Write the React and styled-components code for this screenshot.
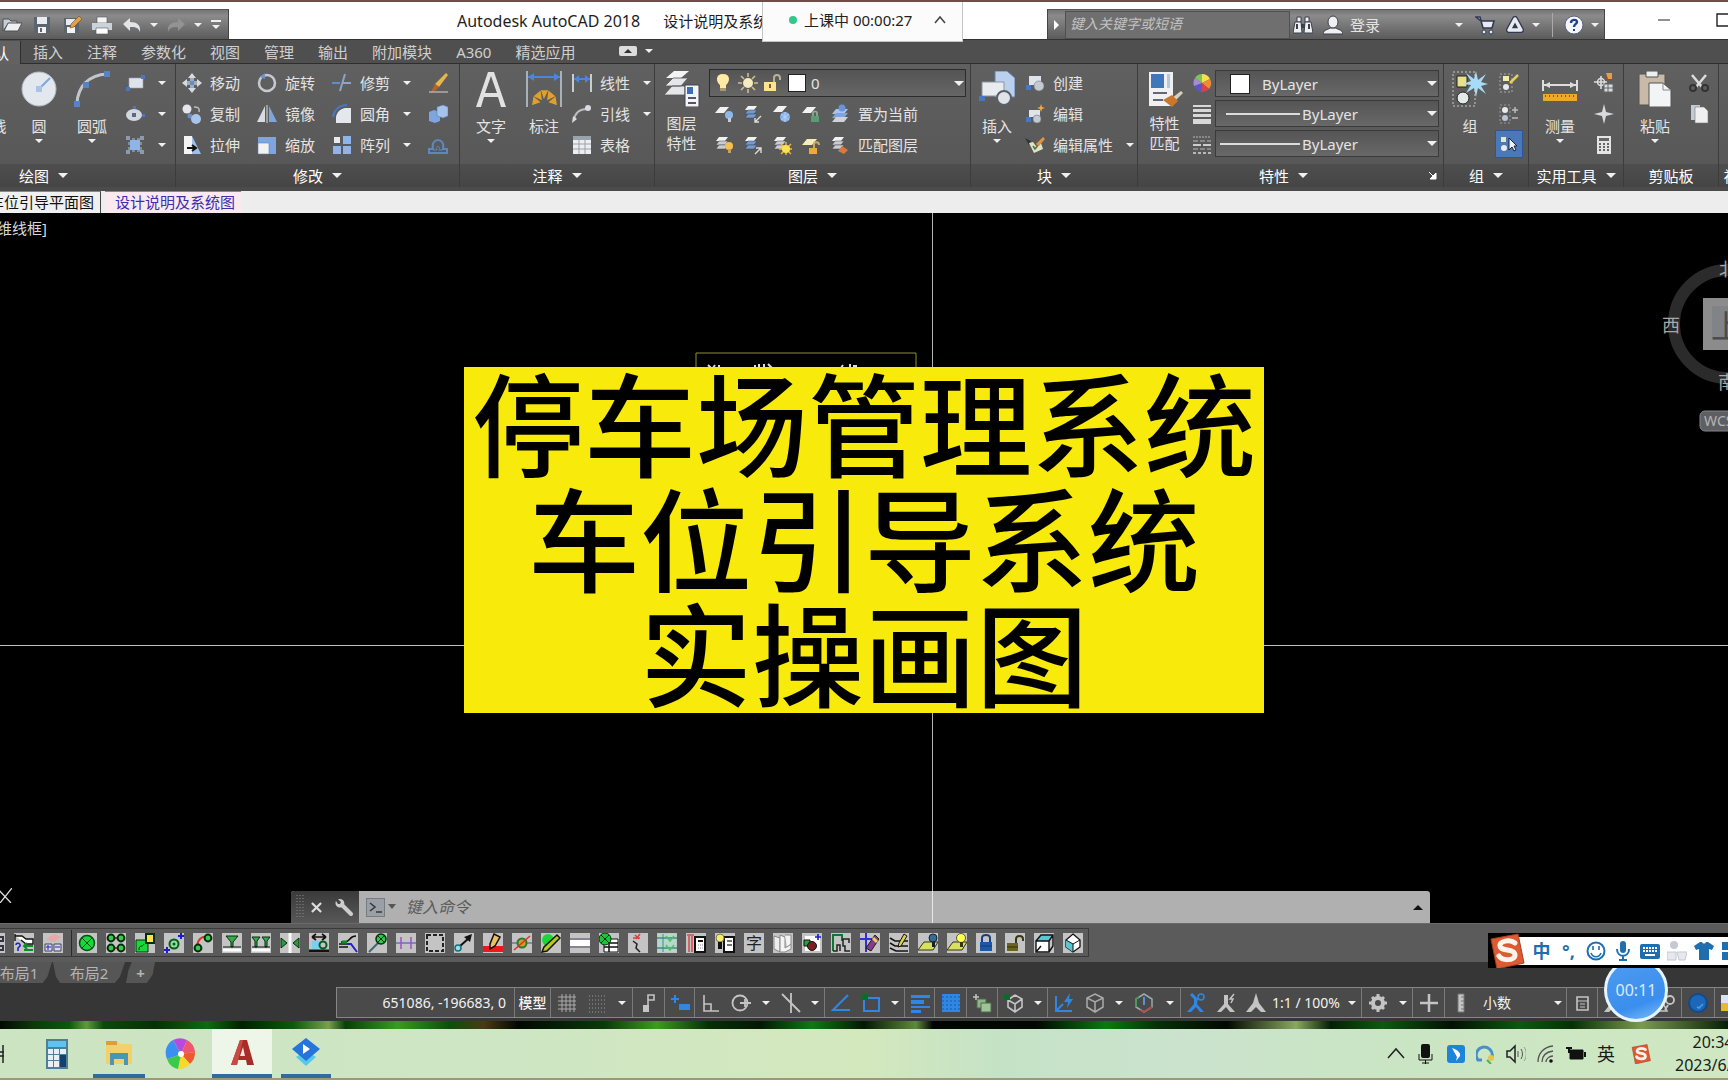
import React, { useState } from "react";
import styled, { createGlobalStyle, css } from "styled-components";

const GlobalStyle = createGlobalStyle`
  * {
    box-sizing: border-box;
  }

  body {
    margin: 0;
    background: #000;
    overflow: hidden;
    font-family: "Noto Sans", "Noto Sans CJK SC", sans-serif;
    font-size: 15px;
    line-height: 20px;
    color: #e4e4e4;
  }

  button,
  input,
  select {
    font: inherit;
    color: inherit;
    background: none;
    border: 0;
    border-radius: 0;
    padding: 0;
    margin: 0;
    outline: none;
  }

  svg {
    display: block;
    flex: none;
  }
`;

/* ---------- icons ---------- */

const Icon = ({ size = 20, box = 20, children }) => (
  <svg width={size} height={size} viewBox={`0 0 ${box} ${box}`} fill="none" aria-hidden="true">
    {children}
  </svg>
);

const Layers = ({ top = "#f2f2f2", mid = "#c9ccd2" }) => (
  <>
    <path d="M5 2h9l-3 4H2z" fill={top} />
    <path d="M5 6h9l-3 4H2z" fill={mid} stroke="#444" strokeWidth=".5" />
    <path d="M5 10h9l-3 4H2z" fill={mid} stroke="#444" strokeWidth=".5" />
  </>
);

const small = {
  open: (
    <>
      <path d="M1 16V4h6l2 2h6v3H6z" fill="#c9ced4" stroke="#4a4f55" />
      <path d="M2 16l4-8h14l-4 8z" fill="#eef0f2" stroke="#4a4f55" />
    </>
  ),
  save: (
    <>
      <path d="M2 2h16v16H2z" fill="#5b6570" />
      <path d="M5 2h10v7H5z" fill="#e8ecf0" />
      <path d="M6 12h8v6H6z" fill="#f4f4f4" />
      <path d="M8 13h2v4H8z" fill="#5b6570" />
    </>
  ),
  saveas: (
    <>
      <path d="M2 3h15v15H2z" fill="#5b6570" />
      <path d="M4 4h9v6H4z" fill="#e8ecf0" />
      <path d="M5 12h8v6H5z" fill="#f4f4f4" />
      <path d="M17 1l3 3-8 8-4 1 1-4z" fill="#e2a04a" stroke="#6b4a22" strokeWidth=".6" />
    </>
  ),
  print: (
    <>
      <path d="M5 2h10v6H5z" fill="#f4f4f4" stroke="#555" strokeWidth=".6" />
      <path d="M0 8h20v7H0z" fill="#cdd2d8" />
      <path d="M4 13h12v6H4z" fill="#fff" stroke="#555" strokeWidth=".6" />
    </>
  ),
  undo: <path d="M1 9l7-6v4c7 0 11 3 10 10-2-5-5-5-10-5v4z" fill="#e2e4e6" />,
  redo: <path d="M19 9l-7-6v4C5 7 1 10 2 17c2-5 5-5 10-5v4z" fill="#939393" />,
  binoculars: (
    <>
      <path d="M4 2h4v5H4zM12 2h4v5h-4z" fill="#f0f0f0" stroke="#39404d" />
      <path d="M2 7h6l1 11H0zM12 7h6l2 11h-9z" fill="#f0f0f0" stroke="#39404d" />
      <path d="M8 9h4v4H8z" fill="#39404d" />
      <path d="M4 9v5M16 9v5" stroke="#39404d" strokeWidth="2" />
    </>
  ),
  user: (
    <>
      <path d="M0 19c1-5 5-4 7-6h6c2 2 6 1 7 6z" fill="#f0f0f0" stroke="#39404d" />
      <ellipse cx="10" cy="7" rx="5" ry="6" fill="#f0f0f0" stroke="#39404d" />
    </>
  ),
  cart: (
    <>
      <path d="M1 2h4l3 11h9l2-7H6z" fill="#e8eaee" stroke="#2f3a55" strokeWidth="1.6" />
      <circle cx="9" cy="17" r="2" fill="#e8eaee" stroke="#2f3a55" />
      <circle cx="16" cy="17" r="2" fill="#e8eaee" stroke="#2f3a55" />
    </>
  ),
  exchange: (
    <>
      <path d="M10 4L4 15h12z" stroke="#2f3a55" strokeWidth="6" strokeLinejoin="round" />
      <path d="M10 4L4 15h12z" stroke="#e8eaee" strokeWidth="3.500" strokeLinejoin="round" />
      <path d="M10 9l-2 4h4z" fill="#2f3a55" />
    </>
  ),
  help: (
    <>
      <circle cx="10" cy="10" r="9" fill="#f4f6fa" stroke="#5a667e" />
      <path d="M7 8c0-4 6-4 6-1 0 2-3 2-3 5" stroke="#24408c" strokeWidth="2.4" />
      <path d="M9 14h2v2H9z" fill="#24408c" />
    </>
  ),
  rect: (
    <>
      <path d="M4 5h14v10H4z" fill="#dfe4ec" stroke="#9aa3b0" strokeWidth=".6" />
      <path d="M1 14h4v4H1zM16 2h4v4h-4z" fill="#4a78c0" />
    </>
  ),
  ellipse: (
    <>
      <ellipse cx="9" cy="11" rx="8" ry="6" fill="#d3d8e0" />
      <path d="M7 9h4v4H7z" fill="#5b6a80" />
      <path d="M8 2h3v3H8zM17 10h3v3h-3z" fill="#4a78c0" />
    </>
  ),
  hatch: (
    <>
      <path d="M5 5h10v10H5z" fill="#8fb4ea" />
      <path d="M2 4h16M2 16h16M4 2v16M16 2v16" stroke="#b7c1cf" strokeDasharray="3 2" />
      <path d="M1 1h4v4H1zM15 1h4v4h-4zM1 15h4v4H1zM15 15h4v4h-4z" fill="#8d9aae" />
    </>
  ),
  move: (
    <>
      <path d="M10 0l4 5H6zM10 20l4-5H6zM0 10l5-4v8zM20 10l-5-4v8z" fill="#d6dbe2" />
      <path d="M8 5h4v10H8zM5 8h10v4H5z" fill="#a4abb5" />
      <path d="M8 8h4v4H8z" fill="#5d8fd0" />
    </>
  ),
  copy: (
    <>
      <circle cx="5" cy="5" r="4.500" fill="#e3e6ea" />
      <circle cx="8" cy="12" r="2.500" fill="#6a8fc4" />
      <circle cx="14" cy="15" r="5" fill="#a9c4e8" />
      <path d="M12 3c4 0 6 1 5 5" stroke="#bbb" strokeWidth="1.5" />
    </>
  ),
  stretch: (
    <>
      <path d="M2 1h8v18H2z" fill="#f2f4f6" />
      <path d="M10 1l9 18h-9z" fill="#9fc0e8" />
      <path d="M5 13h8M10 10l4 3-4 3" stroke="#111" strokeWidth="2" />
    </>
  ),
  rotate: (
    <>
      <circle cx="10" cy="10" r="8" stroke="#c6cad0" strokeWidth="2.5" />
      <path d="M8 0L3 4l5 2z" fill="#6d92c8" />
    </>
  ),
  mirror: (
    <>
      <path d="M8 2v16H0z" fill="#d8dbe0" />
      <path d="M12 2v16h8z" fill="#7fa6dc" />
      <path d="M10 1v18" stroke="#ddd" strokeWidth="1" />
    </>
  ),
  scale: (
    <>
      <path d="M1 2h18v17H1z" fill="#7ea5dd" />
      <path d="M1 8h11v11H1z" fill="#f2f2f2" stroke="#6780a5" strokeWidth=".6" />
    </>
  ),
  trim: (
    <>
      <path d="M0 10h8" stroke="#5d8fd0" strokeWidth="2" />
      <path d="M10 10h9M8 18l5-17" stroke="#8fa4c0" strokeWidth="2" />
    </>
  ),
  fillet: (
    <>
      <path d="M4 19V13c1-5 4-8 9-9h6v15z" fill="#e4e7eb" />
      <path d="M1 13C2 6 7 1 15 1" stroke="#4878bd" strokeWidth="2" />
    </>
  ),
  array: (
    <>
      <path d="M2 2h6v6H2z" fill="#e8eaee" />
      <path d="M11 1h8v8h-8zM1 11h8v8H1zM11 11h8v8h-8z" fill="#8fb4ea" />
    </>
  ),
  erase: (
    <>
      <path d="M18 0l2 2-9 12-4-3z" fill="#e9b648" />
      <path d="M7 11l4 3-4 4-4 1z" fill="#b3642c" />
      <path d="M1 19h19" stroke="#e0d6c0" />
    </>
  ),
  explode: (
    <>
      <path d="M1 8l5-2 6 2v9l-5 2-6-2z" fill="#7ea5dd" />
      <path d="M9 3l6-2 5 2v9l-5 2-6-2z" fill="#a4c2ec" stroke="#5c7caa" strokeWidth=".6" />
    </>
  ),
  offset: (
    <>
      <path d="M1 18h18v-4h-4c3-12-13-12-10 0H1z" stroke="#5f86bd" strokeWidth="2" />
      <path d="M5 15h4c-2-5 4-5 2 0h4" stroke="#5f86bd" />
    </>
  ),
  linear: (
    <>
      <path d="M1 1v18M19 1v18" stroke="#c9ccd2" strokeWidth="2" />
      <path d="M2 6h16" stroke="#4a86dd" strokeWidth="2" />
      <path d="M2 6l5-4v8zM18 6l-5-4v8z" fill="#4a86dd" />
    </>
  ),
  leader: (
    <>
      <path d="M2 16C3 9 7 5 15 5" stroke="#b8bcc2" strokeWidth="2" />
      <circle cx="16" cy="4" r="3" fill="#d8dbe0" />
      <path d="M0 19l1-7 4 3z" fill="#d8dbe0" />
    </>
  ),
  table: (
    <>
      <path d="M1 1h18v18H1z" fill="#eceef0" />
      <path d="M1 1h18v4H1z" fill="#9aa2ac" />
      <path d="M1 9h18M1 14h18M7 5v14M13 5v14" stroke="#9aa2ac" />
    </>
  ),
  bulb: (
    <>
      <path d="M10 1c-8 0-7 8-3 11v3h6v-3c4-3 5-11-3-11z" fill="#ffe9a3" />
      <path d="M7 15h6v3H7z" fill="#a89a6c" />
    </>
  ),
  sun: (
    <>
      <circle cx="10" cy="10" r="5" fill="#f7ecc0" />
      <path
        d="M10 0v4M10 16v4M0 10h4M16 10h4M3 3l3 3M14 14l3 3M3 17l3-3M14 6l3-3"
        stroke="#cdbf8f"
        strokeWidth="1.6"
      />
    </>
  ),
  unlock: (
    <>
      <path d="M1 9h12v9H1z" fill="#ffe38a" />
      <path d="M11 9V5c0-4 6-4 6 0v2" stroke="#b9b09a" strokeWidth="2" />
      <path d="M6 11h2v4H6z" fill="#776326" />
    </>
  ),
  layerOff: (
    <>
      <path d="M6 3h9l-5 6H1z" fill="#f2f2f2" />
      <circle cx="15" cy="11" r="4" fill="#8db8ea" />
      <path d="M14 14h3v4h-3z" fill="#c8ccd2" />
    </>
  ),
  layerIso: (
    <>
      <Layers mid="#6f9bd6" />
      <path d="M18 12l-6 6M12 14v4h4" stroke="#ddd" strokeWidth="1.4" />
    </>
  ),
  layerFreeze: (
    <>
      <path d="M6 2h9l-5 6H1z" fill="#f2f2f2" />
      <circle cx="13" cy="13" r="5" fill="#86b2ec" />
      <path d="M13 8v10M9 10l8 6M17 10l-8 6" stroke="#b9d3f5" />
    </>
  ),
  layerLock: (
    <>
      <path d="M6 3h9l-5 6H1z" fill="#f2f2f2" />
      <path d="M10 12h8v6h-8z" fill="#5d9c72" />
      <path d="M12 12V9c0-2 4-2 4 0v3" stroke="#8fb49b" strokeWidth="1.6" />
    </>
  ),
  layerCur: (
    <>
      <path d="M6 5h12l-4 5H2z" fill="#a7c5ee" />
      <path d="M6 9h12l-4 5H2z" fill="#7ea5dd" />
      <path d="M6 13h12l-4 5H2z" fill="#d0d4da" />
      <circle cx="12" cy="4" r="3.500" fill="#6a95d4" />
    </>
  ),
  layerOn: (
    <>
      <Layers />
      <circle cx="15" cy="11" r="4" fill="#f5c04e" />
      <path d="M14 14h3v4h-3z" fill="#c8a25a" />
    </>
  ),
  layerUniso: (
    <>
      <Layers mid="#6f9bd6" />
      <path d="M12 19l6-6M13 13h5v5" stroke="#ddd" strokeWidth="1.4" />
    </>
  ),
  layerThaw: (
    <>
      <Layers />
      <path d="M14 7v13M7 14h13M9 9l10 10M19 9L9 19" stroke="#e9bf3a" strokeWidth="1.4" />
      <circle cx="14" cy="14" r="4" fill="#ffe04e" />
    </>
  ),
  layerUnlock: (
    <>
      <path d="M6 4h10l-5 6H1z" fill="#f4efb8" />
      <path d="M8 13h8v6H8z" fill="#eda93c" />
      <path d="M13 13V9c0-2 5-3 5 1" stroke="#c9a868" strokeWidth="2" />
    </>
  ),
  layerMatch: (
    <>
      <Layers />
      <path d="M12 11l6 4-4 4-6-3z" fill="#d9793a" />
    </>
  ),
  create: (
    <>
      <path d="M4 3h12v9H4z" fill="#dfe4ec" />
      <path d="M1 12h5v5H1z" fill="#4a78c0" />
      <circle cx="14" cy="13" r="5" fill="#c5cad2" stroke="#777" strokeWidth=".6" />
    </>
  ),
  edit: (
    <>
      <path d="M4 6h11v7H4z" fill="#dfe4ec" />
      <path d="M1 13h5v5H1z" fill="#4a78c0" />
      <circle cx="12" cy="15" r="4" fill="#c5cad2" stroke="#777" strokeWidth=".6" />
      <path d="M16 0l1 3 3 1-3 1-1 3-1-3-3-1 3-1z" fill="#f5a83c" />
    </>
  ),
  editAttr: (
    <>
      <path d="M0 3l6 3-2 4z" fill="#333" />
      <path d="M4 8l5 10 9-4-2-6-5 3-3-4z" fill="#dde3c8" />
      <path d="M8 11l2 3 4-5" stroke="#5a6a3a" strokeWidth="1.5" />
      <path d="M18 2l2 2-6 7-3-2z" fill="#e2933c" />
    </>
  ),
  wheel: (
    <>
      <path d="M10 10L10 1A9 9 0 0 1 18 6z" fill="#f6e04c" />
      <path d="M10 10l8-4a9 9 0 0 1-1 10z" fill="#ef8a3c" />
      <path d="M10 10l7 6a9 9 0 0 1-8 3z" fill="#d8404a" />
      <path d="M10 10l-1 9a9 9 0 0 1-7-6z" fill="#5a57c0" />
      <path d="M10 10l-8 3a9 9 0 0 1 1-8z" fill="#a98ad6" />
      <path d="M10 10L3 5a9 9 0 0 1 7-4z" fill="#79c65c" />
    </>
  ),
  weights: <path d="M1 1h18v2H1zM1 5h18v3H1zM1 10h18v3H1zM1 15h18v5H1z" fill="#d8d8d8" />,
  linetypes: (
    <>
      <path d="M1 2h18" stroke="#b8b8b8" strokeDasharray="2 1" />
      <path d="M1 6h18M1 14h18" stroke="#b8b8b8" strokeDasharray="5 2" />
      <path d="M1 10h18" stroke="#ccc" strokeWidth="2" strokeDasharray="8 2" />
      <path d="M1 18h18" stroke="#b8b8b8" strokeWidth="2" strokeDasharray="3 2" />
    </>
  ),
  groupEdit: (
    <>
      <path d="M1 1h12v18H1z" stroke="#aaa" strokeDasharray="2 2" />
      <path d="M4 3h6v5H4z" fill="#f0ecb0" />
      <circle cx="7" cy="14" r="3" fill="#e8eaee" />
      <path d="M19 2l-8 8" stroke="#e4d24c" strokeWidth="2.5" />
    </>
  ),
  ungroup: (
    <>
      <path d="M1 1h10v18H1z" stroke="#999" strokeDasharray="2 2" />
      <circle cx="6" cy="6" r="3" fill="#e8eaee" />
      <circle cx="6" cy="14" r="3" fill="#b8c6da" />
      <path d="M13 6h6M16 3v6M13 14h6" stroke="#bbb" strokeWidth="1.5" />
    </>
  ),
  groupSel: (
    <>
      <path d="M2 3h5v5H2z" fill="#dfe8c8" />
      <circle cx="5" cy="14" r="3" fill="#e8eaee" />
      <path d="M10 4v12l3-3 2 4 2-1-2-4h3z" fill="#e6f2ff" stroke="#223" />
    </>
  ),
  quickSel: (
    <>
      <path d="M0 9h13M7 3v13" stroke="#ddd" strokeWidth="1.6" />
      <circle cx="7" cy="9" r="3.500" stroke="#ddd" strokeWidth="1.5" />
      <path d="M12 0h6v6h-4z" fill="#ef9a3c" />
      <path d="M10 11h9v8h-9z" fill="#d8dbe0" stroke="#666" />
      <path d="M10 15h9M14 11v8" stroke="#666" />
    </>
  ),
  point: <path d="M10 0l2 8 8 2-8 2-2 8-2-8-8-2 8-2z" fill="#d8dbe0" />,
  calc: (
    <>
      <path d="M3 1h14v18H3z" fill="#e4e4e4" />
      <path d="M5 3h10v3H5z" fill="#666" />
      <path d="M6 8v9M10 8v9M14 8v9" stroke="#666" strokeWidth="2" strokeDasharray="2 1" />
    </>
  ),
  cut: (
    <>
      <path d="M3 2l10 12M17 2L7 14" stroke="#dcdcdc" strokeWidth="2.5" />
      <circle cx="4" cy="15" r="3" stroke="#333" strokeWidth="2" />
      <circle cx="16" cy="15" r="3" stroke="#333" strokeWidth="2" />
    </>
  ),
  copyClip: (
    <>
      <path d="M2 1h9v15H2z" fill="#c5cad2" />
      <path d="M6 3h9l4 4v12H6z" fill="#f0f0f0" stroke="#777" strokeWidth=".6" />
    </>
  ),
};

// 36px artwork used by the tall ribbon buttons
const big = {
  polyline: <circle cx="18" cy="18" r="14" stroke="#b4b8be" strokeWidth="3" />,
  circle: (
    <>
      <circle cx="18" cy="18" r="17" fill="#e3e7ee" stroke="#b4bac4" />
      <path d="M18 18L29 7" stroke="#7ea5dd" strokeWidth="2" />
      <path d="M15 15h6v6h-6z" fill="#a9c4e8" />
    </>
  ),
  arc: (
    <>
      <path d="M3 32C4 16 14 4 33 3" stroke="#c2c6cc" strokeWidth="3" />
      <path d="M0 30h6v6H0zM30 0h6v6h-6zM9 11h6v6H9z" fill="#5682c8" />
    </>
  ),
  text: <path d="M3 36L15 1h6l12 35h-5l-3-10H11L8 36zM12 22h12L18 5z" fill="#e2e2e2" fillRule="evenodd" />,
  dim: (
    <>
      <path d="M1 0v36M35 0v36" stroke="#aab0b8" strokeWidth="2" />
      <path d="M2 6h32" stroke="#4a86dd" strokeWidth="2" />
      <path d="M2 6l6-4v8zM34 6l-6-4v8z" fill="#4a86dd" />
      <path
        d="M7 33l6-2-5-4zM9 25l6 3-1-7zM16 20l2 6 3-6zM28 25l-6 3 1-7zM30 33l-6-2 5-4z"
        fill="#e0a02c"
        stroke="#e0a02c"
        strokeWidth="1.5"
      />
    </>
  ),
  layerProps: (
    <>
      <path d="M10 0h15l-8 7H2z" fill="#f4f4f4" />
      <path d="M9 7h15l-7 8H1zM8 15h13v9H0z" fill="#e4e6ea" stroke="#555" strokeWidth=".8" />
      <path d="M21 14h14v22H21z" fill="#f2f4f6" stroke="#445" />
      <path d="M23 16h6v7h-6z" fill="#3e6db5" />
      <path d="M24 27h8M24 32h8" stroke="#556" strokeWidth="2" />
    </>
  ),
  insert: (
    <>
      <path d="M16 0h12l8 7v19H16z" fill="#b9d0ef" stroke="#64809f" />
      <path d="M3 11h22v14H3z" fill="#e8ebef" stroke="#8d949e" />
      <circle cx="25" cy="27" r="7" fill="#e0e3e8" stroke="#596069" strokeWidth="2" />
      <path d="M0 25h6v5H0z" fill="#4a78c0" />
    </>
  ),
  matchProps: (
    <>
      <path d="M2 1h24v34H2z" fill="#eef0f2" />
      <path d="M4 3h13v14H4z" fill="#3e78b8" />
      <path d="M20 3h3v14h-3z" fill="#b8c6da" />
      <path d="M6 22h14M6 29h10" stroke="#667" strokeWidth="2" />
      <path d="M34 20l2 2-8 8-3-3z" fill="#d8d0c0" />
      <path d="M16 29l9-5 6 6-6 6z" fill="#c9772c" />
    </>
  ),
  group: (
    <>
      <path d="M1 1h22v34H1z" stroke="#c8c8c8" strokeDasharray="2 2" />
      <path d="M5 5h10v11H5z" fill="#e9e08a" stroke="#222" />
      <circle cx="11" cy="27" r="6" fill="#e4eae8" stroke="#222" />
      <path d="M24 0l2 9 8-6-5 8 7 2-7 2 5 8-8-6-2 9-2-9-8 5 5-8-8-1 8-3-5-8 8 6z" fill="#a7dcf8" />
    </>
  ),
  measure: (
    <>
      <path d="M1 9v11M35 9v11" stroke="#ddd" strokeWidth="2" />
      <path d="M2 14h32" stroke="#ddd" strokeWidth="2" />
      <path d="M2 14l6-3v6zM34 14l-6-3v6z" fill="#ddd" />
      <path d="M1 23h34v7H1z" fill="#eda92c" />
      <path d="M3 25h30" stroke="#8a5a10" strokeWidth="2" strokeDasharray="1 3" />
    </>
  ),
  paste: (
    <>
      <path d="M2 3h26v31H2z" fill="#c8b9a8" stroke="#555" />
      <path d="M9 0h12v6H9z" fill="#eceef0" stroke="#555" />
      <path d="M12 12h14l8 7v17H12z" fill="#f2f4f6" stroke="#555" />
      <path d="M26 12v7h8" stroke="#888" />
    </>
  ),
};

const G = "#0c8a2c";

// drawing helper toolbar, each on a light tile
const helper = {
  nodes: <path d="M12 4h6v4h-6zM12 13h6v4h-6z" stroke="#334" strokeWidth="2" />,
  help: (
    <>
      <path d="M1 1v7M1 3h7l4 3h7v5h-7L7 7" fill="#fff" stroke="#111" strokeWidth="1.4" />
      <path d="M2 12c0-3 5-2 4 1l-2 2v3" stroke="#2222c8" strokeWidth="1.6" />
      <path d="M10 13h9M10 17h9M13 10l-3 3 3 3" stroke={G} strokeWidth="2" />
    </>
  ),
  blocks: (
    <>
      <path d="M3 6l8-5 7 3-7 5z" fill="#e8a8a8" />
      <path d="M2 11h7v7H2zM11 11h7v7h-7z" fill="#d8d8f0" stroke="#445" />
      <path d="M3 14h5M5 12v5M12 14h5" stroke="#2222c8" />
    </>
  ),
  lamp: (
    <>
      <circle cx="10" cy="10" r="7.500" fill="#18d838" stroke="#064d14" strokeWidth="1.5" />
      <path d="M5 5l10 10M15 5L5 15" stroke="#064d14" />
    </>
  ),
  four: (
    <>
      <path d="M5 5h10M5 15h10" stroke="#d03020" strokeWidth="2" />
      {[5, 15].map((x) => [5, 15].map((y) => (
        <circle key={`${x}${y}`} cx={x} cy={y} r="3.400" fill="#3ac850" stroke="#042d0c" strokeWidth="2" />
      )))}
    </>
  ),
  replace: (
    <>
      <path d="M1 7h12v12H1z" fill="#18d838" stroke="#042d0c" />
      <path d="M11 1h8v9h-8z" fill="#ffe24a" stroke="#042d0c" strokeWidth="2" />
      <path d="M4 17c0-6 3-2 5-6" stroke="#042d0c" />
    </>
  ),
  place: (
    <>
      <circle cx="10" cy="11" r="4.500" fill="#8fe0a0" stroke="#0a5a1c" strokeWidth="2" />
      <circle cx="10" cy="11" r="1.500" fill="#0a5a1c" />
      <path d="M0 17h6M3 14v6M14 3h6M17 0v6" stroke="#1818e0" strokeWidth="2" />
    </>
  ),
  curve: (
    <>
      <path d="M4 13C5 6 9 3 14 4" stroke="#e03020" strokeWidth="2" />
      <circle cx="5" cy="15" r="3.400" fill="#3ac850" stroke="#042d0c" strokeWidth="2" />
      <circle cx="15" cy="5" r="3.400" fill="#3ac850" stroke="#042d0c" strokeWidth="2" />
    </>
  ),
  glass: (
    <>
      <path d="M4 3h12l-5 6v5H9V9z" fill="#3aa850" stroke="#042d0c" />
      <path d="M1 17h18" stroke="#fff" strokeWidth="3" />
      <path d="M1 14h18" stroke="#111" />
    </>
  ),
  glasses: (
    <>
      <path d="M1 4h8L6 8v6H4V8zM11 4h8l-3 4v6h-2V8z" fill="#3aa850" stroke="#042d0c" />
      <path d="M1 17h18" stroke="#fff" strokeWidth="3" />
      <path d="M1 14h18" stroke="#111" />
    </>
  ),
  mirror: (
    <>
      <path d="M10 0v20" stroke="#fff" strokeWidth="3" />
      <path d="M1 5l6 5-6 5zM19 5l-6 5 6 5z" fill="#2a9a40" stroke="#042d0c" />
    </>
  ),
  align: (
    <>
      <path d="M3 8h7v8H3z" fill="#7ad0f0" />
      <path d="M3 4h14M3 4l4-3M3 4l4 3M17 4l-4-3M17 4l-4 3" stroke="#111" strokeWidth="1.6" />
      <circle cx="14" cy="12" r="3.500" stroke="#0a5a1c" strokeWidth="2" />
      <path d="M0 18h20" stroke="#111" strokeWidth="3" />
    </>
  ),
  wire: (
    <>
      <path d="M1 14h9M3 9h4c6-1 4-6 11-6M1 11h9" stroke="#111" strokeWidth="1.6" />
      <path d="M9 11h4l6 8" stroke="#2222c8" strokeWidth="2" />
      <path d="M4 9h5" stroke={G} strokeWidth="3" />
    </>
  ),
  lampLine: (
    <>
      <path d="M2 19L12 9" stroke="#3c6a70" strokeWidth="2" />
      <circle cx="14" cy="6" r="5" fill="#30c848" stroke="#042d0c" strokeWidth="1.5" />
      <path d="M11 3l6 6M17 3l-6 6" stroke="#042d0c" />
    </>
  ),
  breakLine: (
    <>
      <path d="M0 10h20" stroke="#6a70b8" strokeWidth="1.5" />
      <path d="M5 4v12M15 4v12" stroke="#a050c8" strokeWidth="1.5" />
    </>
  ),
  dashed: <path d="M2 2h16v16H2z" stroke="#222" strokeWidth="2" strokeDasharray="4 2" />,
  arrow: (
    <>
      <path d="M5 14L15 5" stroke="#111" strokeWidth="2" />
      <path d="M18 1l-2 8-6-5z" fill="#111" />
      <circle cx="4" cy="15" r="3" fill="#9ae0e8" stroke="#107080" strokeWidth="1.5" />
    </>
  ),
  redPen: (
    <>
      <path d="M0 13h20v6H0z" fill="#ee1818" />
      <path d="M11 1l6 3-5 9-5 3V11z" fill="#e8c060" stroke="#111" strokeWidth="1.5" />
    </>
  ),
  strike: (
    <>
      <path d="M0 10h20" stroke="#456" />
      <circle cx="10" cy="10" r="4.500" fill="#c8a030" stroke="#2a7a30" strokeWidth="2" />
      <path d="M2 17L18 3" stroke="#e03020" strokeWidth="1.500" />
    </>
  ),
  greenPen: (
    <>
      <circle cx="7" cy="7" r="6" fill="#18d838" />
      <path d="M16 2l3 3L6 18l-5 1 2-5z" fill="#b8c820" stroke="#111" strokeWidth="1.5" />
    </>
  ),
  band: (
    <>
      <path d="M0 7h20v6H0z" fill="#fff" />
      <path d="M0 6h20M0 14h20" stroke="#446" />
    </>
  ),
  lampTable: (
    <>
      <path d="M5 6h14v13H5z" fill="#fff" stroke="#111" />
      <path d="M5 10h14M5 14h14M10 6v13" stroke="#111" strokeWidth="1.5" />
      <circle cx="6" cy="6" r="6" fill="#18c838" stroke="#042d0c" />
      <path d="M2 2l8 8M10 2l-8 8" stroke="#042d0c" />
    </>
  ),
  spark: (
    <>
      <path d="M5 8l4 3-1 4 4 4" stroke="#222" strokeWidth="1.5" />
      <path d="M7 2l4 4M12 1l-4 5M5 5h7" stroke="#d84040" strokeWidth="1.5" />
    </>
  ),
  grid: (
    <>
      <path d="M1 1h18v18H1z" fill="#b4d8cc" />
      <path d="M0 5h20M0 15h20" stroke="#488" strokeWidth="1.4" />
      <path d="M6 1v18" stroke="#488" />
      <path d="M9 3l4 5 4-5M9 12l4 5 4-5" stroke="#50c060" strokeWidth="1.5" />
    </>
  ),
  redTable: (
    <>
      <path d="M1 2h7M3 2v17M6 2v17" stroke="#d06868" strokeWidth="2" />
      <path d="M9 4h10v15H9z" fill="#fff" stroke="#111" strokeWidth="2" />
      <path d="M12 8h5" stroke="#111" strokeWidth="2" />
      <path d="M12 12h5M12 15h5" stroke="#889" strokeDasharray="1 1" />
    </>
  ),
  bulbTable: (
    <>
      <path d="M9 4h10v15H9z" fill="#fff" stroke="#111" strokeWidth="2" />
      <path d="M12 8h5M12 12h5" stroke="#445" strokeWidth="1.5" />
      <circle cx="5" cy="5" r="4" fill="#f4ee60" stroke="#776" />
      <path d="M3 9h4v7H3z" fill="#111" />
    </>
  ),
  char: (
    <text x="10" y="16" textAnchor="middle" fontSize="16" fill="#222">
      字
    </text>
  ),
  pages: (
    <>
      <path d="M1 3l6 2v14l-6-3z" fill="#eee" stroke="#888" />
      <path d="M7 2l5 2v11l6-4v5l-6 3H7z" fill="#f4f4f4" stroke="#888" />
      <path d="M12 2h6v9l-4 3" fill="#f4f4f4" stroke="#888" />
    </>
  ),
  cherry: (
    <>
      <path d="M3 3h15v15H3z" fill="#fff" />
      <path d="M2 7h6v6H2z" fill="#28a040" stroke="#111" />
      <circle cx="10" cy="13" r="4.500" fill="#7a2020" stroke="#111" />
      <path d="M13 4h6M16 1v6" stroke="#1818e0" strokeWidth="1.6" />
    </>
  ),
  contour: (
    <>
      <path d="M2 18V2h9v6" stroke="#0c7a2c" strokeWidth="2" />
      <path d="M2 18h4v-6h3v6M19 18h-5v-5h-2V6h6v4" stroke="#222" strokeWidth="1.500" />
    </>
  ),
  cross: (
    <>
      <path d="M0 6h16M6 0v19" stroke="#3030d8" strokeWidth="2" />
      <path d="M15 2l4 4-8 12-5-3z" fill="#8a3a88" stroke="#221" />
      <path d="M13 5l4 4" stroke="#e8d060" strokeWidth="3" />
    </>
  ),
  sketch: (
    <>
      <path d="M1 5l5 3h13M1 10l5 3h13M1 15l6 3h12" stroke="#111" strokeWidth="1.500" />
      <path d="M15 1l3 2-6 10-3 1 1-4z" fill="#e0d048" stroke="#111" />
    </>
  ),
  layerBlue: (
    <>
      <path d="M6 9h14l-5 8H0z" fill="#d8e060" stroke="#331" />
      <circle cx="15" cy="5" r="4" fill="#3a6a90" stroke="#123" />
      <path d="M14 9h3v5h-3z" fill="#123" />
    </>
  ),
  layerYellow: (
    <>
      <path d="M6 9h14l-5 8H0z" fill="#d8e060" stroke="#331" />
      <circle cx="14" cy="5" r="4.500" fill="#ffff50" stroke="#554" />
      <path d="M13 9h3v5h-3z" fill="#332" />
    </>
  ),
  lock: (
    <>
      <path d="M4 9h12v9H4z" fill="#1c58a8" />
      <path d="M6 9V5c0-4 8-4 8 0v4" stroke="#1c3f78" strokeWidth="2" />
      <path d="M4 13h12" stroke="#123a70" />
    </>
  ),
  unlock: (
    <>
      <path d="M2 10h11v8H2z" fill="#6a6418" />
      <path d="M11 10V6c0-4 7-4 7 0v2" stroke="#3a3610" strokeWidth="2" />
      <path d="M2 14h11" stroke="#332f08" />
    </>
  ),
  cube: (
    <>
      <path d="M2 8l5-6h12l-4 6z" fill="#58c8d0" />
      <path d="M2 8h13v11H2z" fill="#fff" />
      <path d="M2 8h13v11H2zM2 8l5-6h12v11l-4 6M15 8l4-6M2 19l5-6" stroke="#111" strokeWidth="1.4" />
    </>
  ),
  cubeIso: (
    <>
      <path d="M10 1l7 6v7l-7 5-7-5V7z" fill="#fff" stroke="#111" strokeWidth="1.3" />
      <path d="M3 7l7 4v8l-7-5z" fill="#58c8d0" />
      <path d="M3 7l7 4 7-4M10 11v8" stroke="#111" />
    </>
  ),
};

const B = "#2f86e4";
const W = "#c4c4c4";

const status = {
  grid: <path d="M5 1v18M9 1v18M13 1v18M17 1v18M1 4h18M1 8h18M1 12h18M1 16h18" stroke="#aaa" />,
  snap: (
    <path d="M2 3h17M2 7h17M2 11h17M2 15h17M2 19h17" stroke="#999" strokeDasharray="1 2" />
  ),
  infer: (
    <>
      <path d="M4 12h6v7H4z" fill={W} />
      <path d="M9 12V2h6v5H9" stroke={W} strokeWidth="1.6" />
    </>
  ),
  dyn: (
    <>
      <path d="M1 6h8M5 2v8" stroke={B} strokeWidth="2" />
      <path d="M9 11h11v6H9z" fill={B} />
    </>
  ),
  ortho: <path d="M3 2v16h15M3 11h7v7" stroke={W} strokeWidth="1.6" />,
  polar: (
    <>
      <circle cx="9" cy="10" r="7.500" stroke={W} strokeWidth="1.8" />
      <path d="M9 10h11M14 6v8" stroke={W} strokeWidth="1.8" />
    </>
  ),
  iso: <path d="M10 0v20M1 1l18 18" stroke={W} strokeWidth="1.8" />,
  track: <path d="M17 2L2 17h17" stroke={B} strokeWidth="2" />,
  osnap: (
    <>
      <path d="M3 5h15v13H3z" stroke={B} strokeWidth="2" />
      <path d="M1 1h6v6H1z" fill="#0c6a2c" />
    </>
  ),
  weight: <path d="M1 2h19v3H1zM1 7h13v4H1zM1 13h19v2H1zM1 17h10v3H1z" fill={B} />,
  transp: (
    <>
      <path d="M1 1h18v18H1z" fill={B} />
      <path d="M1 4h18M1 8h18M1 12h18M1 16h18" stroke="#1b5aa8" strokeDasharray="2 2" />
    </>
  ),
  cycle: (
    <>
      <path d="M5 6h9v9H5z" fill="#8fb487" stroke="#4d6b48" />
      <path d="M9 10h10v9H9z" fill="#9fc495" stroke="#4d6b48" />
      <path d="M1 4h6M4 1v6" stroke={W} strokeWidth="1.5" />
    </>
  ),
  snap3d: (
    <>
      <path d="M11 2l7 4v8l-7 5-7-5V7l7-5M4 7l7 4 7-5M11 11v8" stroke={W} strokeWidth="1.6" />
      <path d="M0 1h6v6H0z" fill="#0c6a2c" />
    </>
  ),
  ducs: (
    <>
      <path d="M2 3v15h16M2 18l7-7" stroke={B} strokeWidth="2" />
      <path d="M16 0l-6 9h4l-1 6 6-9h-4z" fill={B} />
    </>
  ),
  cube: <path d="M10 1l8 4v9l-8 5-8-5V5zM2 5l8 4 8-4M10 9v10" stroke="#aaa" strokeWidth="1.5" />,
  gizmo: (
    <>
      <path d="M10 1l8 5v8l-8 5-8-5V6z" stroke="#9aa" strokeWidth="1.5" />
      <path d="M2 14V6l3-2" stroke="#3c9a50" strokeWidth="1.5" />
      <path d="M6 17l4 2 8-5" stroke="#b84848" strokeWidth="1.5" />
      <path d="M10 4v8" stroke="#5a90d8" strokeWidth="2" />
    </>
  ),
  annoVis: (
    <>
      <path d="M8 5h4l-1 6 7 8h-4l-4-5-5 5H1l7-8z" fill={B} />
      <circle cx="15" cy="4" r="3" stroke={B} strokeWidth="1.5" />
      <path d="M5 1l5 5" stroke={B} strokeWidth="3" />
    </>
  ),
  annoAuto: (
    <>
      <path d="M8 2h4v9l7 8h-5l-4-5-5 5H1l7-8z" fill={W} />
      <path d="M18 1l-4 5h3l-2 4" stroke={W} strokeWidth="1.5" />
    </>
  ),
  anno: <path d="M10 0l3 10 7 9h-5l-5-5-5 5H0l7-9z" fill={W} />,
  gear: (
    <>
      <circle cx="10" cy="10" r="5" stroke={W} strokeWidth="4" />
      <path d="M10 1v4M10 15v4M1 10h4M15 10h4M4 4l2 2M14 14l2 2M4 16l2-2M14 6l2-2" stroke={W} strokeWidth="3" />
    </>
  ),
  plus: <path d="M10 1v18M1 10h18" stroke={W} strokeWidth="2.5" />,
  ruler: <path d="M7 1h6v18H7zM10 4h3M10 8h3M10 12h3M10 16h3" fill={W} stroke="#777" />,
  props: (
    <>
      <path d="M5 4h11v13H5z" stroke={W} strokeWidth="1.6" />
      <path d="M5 8h11M8 11h5M8 14h5" stroke={W} />
    </>
  ),
  isolate: (
    <>
      <path d="M1 18l5-10 5 10z" stroke={W} strokeWidth="1.6" />
      <circle cx="14" cy="7" r="4" stroke={W} strokeWidth="1.8" />
      <path d="M12 12l-3 5" stroke={W} strokeWidth="1.8" />
    </>
  ),
  accel: (
    <>
      <circle cx="10" cy="10" r="9" fill="#1d67b8" stroke="#134a88" strokeWidth="2" />
      <path d="M9 14l2 1 4-4" stroke="#4f9ae8" strokeWidth="1.5" />
    </>
  ),
  shot: (
    <>
      <path d="M1 2h19v16H1z" fill="#d8e4ee" />
      <path d="M1 10h10v8H1z" fill="#e8b830" />
    </>
  ),
};

const Sogou = ({ size }) => (
  <Icon size={size} box={36}>
    <path d="M2 6l27-5 6 29-27 6z" fill="#dd5a33" stroke="#a83e20" />
    <path
      d="M26 10c-5-4-16-2-15 3 1 6 15 2 15 9 0 6-13 6-16 1"
      stroke="#fff4ea"
      strokeWidth="5"
      strokeLinecap="round"
    />
  </Icon>
);

/* ---------- layout ---------- */

const Page = styled.div`
  position: relative;
  min-height: 100vh;
  display: flex;
  flex-direction: column;
  overflow: hidden;
`;

const Caret = styled.i`
  flex: none;
  border: ${(p) => (p.$big ? 5 : 4)}px solid transparent;
  border-top-color: #f0f0f0;
  border-bottom: 0;
`;

const TitleBar = styled.header`
  display: flex;
  align-items: flex-end;
  height: 40px;
  border-top: 2px solid #6f4c4a;
  border-bottom: 1px solid #333;
  background: #fff;
`;

const chrome = css`
  height: 30px;
  display: flex;
  align-items: center;
  background: linear-gradient(#757575, #8b8b8b 20%, #5b5b5b);
  border-top: 1px solid #555;
`;

const QuickAccess = styled.div`
  ${chrome}
  width: 232px;
  margin-left: -3px;
  border-right: 1px solid #444;
`;

const QuickButton = styled.button`
  display: flex;
  justify-content: center;
  align-items: center;
  flex: none;
  width: ${(p) => (p.$narrow ? 14 : 30)}px;
  height: 28px;
`;

const CustomizeButton = styled(QuickButton)`
  flex-direction: column;
  gap: 3px;
  width: 22px;

  &::before {
    content: "";
    width: 10px;
    height: 2px;
    background: #f0f0f0;
  }
`;

const WindowTitle = styled.div`
  flex: 1;
  align-self: flex-start;
  display: flex;
  gap: 23px;
  padding: 9px 0 0 228px;
  overflow: hidden;
  white-space: nowrap;
  color: #1e1e1e;

  span:first-child {
    font-size: 16px;
  }
`;

const ClassTimer = styled.button`
  z-index: 1;
  align-self: flex-start;
  display: flex;
  align-items: center;
  width: 201px;
  height: 40px;
  padding: 0 16px 4px 26px;
  gap: 7px;
  background: #fbfbfb;
  border: 1px solid #c4c4c4;
  border-top: 0;
  color: #222;
  white-space: nowrap;

  &::before {
    content: "";
    width: 8px;
    height: 8px;
    border-radius: 50%;
    background: #35c68c;
  }

  svg {
    margin-left: auto;
  }
`;

const InfoCenter = styled.div`
  ${chrome}
  width: 558px;
  margin-left: 84px;
  border-left: 1px solid #444;
  border-right: 1px solid #444;
`;

const InfoToggle = styled.button`
  width: 17px;
  height: 28px;
  display: flex;
  align-items: center;
  justify-content: center;

  &::before {
    content: "";
    border: 5px solid transparent;
    border-left-color: #fff;
    border-right: 0;
  }
`;

const SearchInput = styled.input`
  width: 225px;
  height: 28px;
  padding: 0 4px 3px;
  background: #6f6f6f;
  border: 1px solid #505050;
  font-size: 14px;
  font-style: italic;

  &::placeholder {
    color: #c2c2c2;
    font-style: italic;
  }
`;

const InfoButton = styled.button`
  display: flex;
  align-items: center;
  gap: 7px;
  height: 28px;
  margin-left: ${(p) => p.$gap}px;
  white-space: nowrap;
`;

const InfoRule = styled.i`
  width: 1px;
  height: 24px;
  margin-left: 12px;
  background: #aaa;
`;

const WindowButtons = styled.div`
  width: 123px;
  height: 37px;
  overflow: hidden;
  display: flex;
  align-items: center;
  gap: 46px;
  padding: 0 0 1px 53px;

  button {
    flex: none;
    height: 24px;
    display: flex;
    align-items: center;
  }
`;

const TabBar = styled.nav`
  display: flex;
  align-items: flex-end;
  height: 24px;
  margin-left: -32px;
  background: #4f4f4f;
  border-bottom: 1px solid #2e2e2e;
  color: #cfcfcf;
`;

const RibbonTab = styled.button`
  height: 22px;
  padding: 0 ${(p) => (p.$active ? 11 : 12)}px;
  white-space: nowrap;
  ${(p) =>
    p.$active &&
    css`
      height: 23px;
      margin-bottom: -1px;
      background: #626262;
      border-right: 1px solid #2e2e2e;
      color: #fff;
    `}
`;

const CollapseButton = styled.button`
  display: flex;
  align-items: center;
  gap: 8px;
  height: 24px;
  margin-left: 32px;
`;

const Ribbon = styled.section`
  display: flex;
  margin-left: -88px;
  background: #5a5a5a;
  border-bottom: 4px solid #4b4b4b;
  white-space: nowrap;
`;

const PanelBox = styled.div`
  flex: none;
  width: ${(p) => p.$width}px;
  border-right: 1px solid #3c3c3c;
  box-shadow: inset -1px 0 #6e6e6e;
  overflow: hidden;
`;

const PanelBody = styled.div`
  display: flex;
  height: 100px;
  padding: 3px 0 3px ${(p) => p.$pad}px;
  background: linear-gradient(#606060, #585858);
`;

const PanelCaption = styled.button`
  position: relative;
  display: flex;
  align-items: center;
  justify-content: center;
  gap: 9px;
  width: 100%;
  height: 23px;
  padding-right: ${(p) => (p.$launcher ? 14 : 0)}px;
  background: linear-gradient(#4e4e4e, #454545);
  color: #fff;

  svg {
    position: absolute;
    right: 6px;
  }
`;

const Panel = ({ width, pad = 0, title, caret = true, launcher, children }) => (
  <PanelBox $width={width}>
    <PanelBody $pad={pad}>{children}</PanelBody>
    <PanelCaption $launcher={launcher}>
      {title}
      {caret && <Caret $big />}
      {launcher && (
        <Icon size={8} box={8}>
          <path d="M0 0l5 5M7 1v6H1z" stroke="#fff" fill="#fff" />
        </Icon>
      )}
    </PanelCaption>
  </PanelBox>
);

const BigButton = styled.button`
  flex: none;
  display: flex;
  flex-direction: column;
  align-items: center;
  width: ${(p) => p.$width}px;
  height: 92px;
  padding-top: 4px;

  svg {
    margin-bottom: ${(p) => (p.$two ? 6 : 9)}px;
  }

  i {
    margin-top: 3px;
  }
`;

const Big = ({ icon, label, second, caret, width }) => (
  <BigButton $width={width} $two={!!second}>
    <Icon size={36} box={36}>
      {big[icon]}
    </Icon>
    <span>{label}</span>
    {second && <span>{second}</span>}
    {caret && <Caret />}
  </BigButton>
);

const ToolGrid = styled.div`
  display: grid;
  grid-template-rows: repeat(3, 31px);
  grid-auto-flow: column;
  column-gap: ${(p) => p.$gap || 0}px;
  margin-left: ${(p) => p.$left || 0}px;
  align-content: start;
`;

const ToolButton = styled.button`
  display: flex;
  align-items: center;
  gap: 8px;
  height: 31px;

  i {
    margin-left: 5px;
  }
`;

const PressedTool = styled(ToolButton)`
  justify-content: center;
  width: 28px;
  height: 28px;
  margin: 1px -4px;
  background: #4a78b8;
  border: 1px solid #2d5692;
`;

const Tool = ({ icon, label, caret }) => (
  <ToolButton aria-label={label || icon}>
    <Icon>{small[icon]}</Icon>
    {label}
    {caret && <Caret />}
  </ToolButton>
);

const LayerTools = styled.div`
  flex: 1;
  margin: 0 4px 0 6px;
`;

const LayerSelect = styled.button`
  display: flex;
  align-items: center;
  gap: 5px;
  width: 100%;
  height: 28px;
  margin: 2px 0 1px;
  padding: 0 1px 0 3px;
  background: linear-gradient(#545454, #666);
  border: 1px solid #2c2c2c;

  i:last-child {
    margin-left: auto;
  }
`;

const Swatch = styled.i`
  flex: none;
  width: ${(p) => p.$size}px;
  height: ${(p) => p.$size}px;
  background: #fff;
  border: 1px solid #222;
`;

const LayerRow = styled.div`
  display: flex;
  align-items: center;
  gap: 9px;
  height: 31px;
  padding-left: 5px;
`;

const Combos = styled.div`
  flex: 1;
  display: flex;
  flex-direction: column;
  gap: 3px;
  margin: 3px 4px 0 3px;
`;

const Combo = styled.label`
  display: flex;
  align-items: center;
  height: 27px;
  padding: 0 1px 0 ${(p) => p.$pad}px;
  background: linear-gradient(#555, #686868);
  border: 1px solid #3a3a3a;

  select {
    flex: 1;
    min-width: 0;
    appearance: none;
    margin-left: ${(p) => p.$gap}px;
  }
`;

const Line = styled.i`
  width: ${(p) => p.$width}px;
  height: 2px;
  background: #dcdcdc;
`;

const FileTabs = styled.nav`
  display: flex;
  height: 22px;
  padding-right: 8px;
  margin-left: -18px;
  background: #ededed;
  gap: 4px;
`;

const FileTab = styled.button`
  height: 22px;
  padding: 0 6px 0 ${(p) => (p.$active ? 10 : 7)}px;
  line-height: 21px;
  white-space: nowrap;
  color: ${(p) => (p.$active ? "#3b2fae" : "#111")};
  background: ${(p) => (p.$active ? "#fae9ef" : "#f0f0f0")};
  border-right: ${(p) => (p.$active ? 0 : "1px solid #444")};
  border-top: 1px solid #888;
`;

const Canvas = styled.main`
  position: relative;
  flex: 1;
  background: #000;
  overflow: hidden;
`;

const ViewLabel = styled.div`
  margin: 5px 0 0 -18px;
  color: #d8d8d8;
`;

const CrossX = styled.i`
  position: absolute;
  left: 0;
  right: 0;
  top: 432px;
  height: 1px;
  background: rgba(255, 255, 255, 0.75);
`;

const CrossY = styled.i`
  position: absolute;
  top: 0;
  bottom: 0;
  left: 932px;
  width: 1px;
  background: rgba(255, 255, 255, 0.7);
`;

const Drawing = styled.svg`
  position: absolute;
  left: 695px;
  top: 139px;
`;

const ViewCube = styled.svg`
  position: absolute;
  right: 0;
  top: 35px;
`;

const UcsMark = styled.svg`
  position: absolute;
  left: 0;
  bottom: 20px;
`;

const CommandLine = styled.form`
  position: absolute;
  left: 291px;
  right: 298px;
  bottom: 0;
  height: 32px;
  display: flex;
  align-items: center;
  background: #b0b0b0;
  border-radius: 3px 3px 0 0;

  input {
    flex: 1;
    margin-left: 7px;
    font-size: 16px;
    font-style: italic;
    color: #333;
  }

  input::placeholder {
    color: #5c5c5c;
    font-style: italic;
  }
`;

const CommandGrip = styled.div`
  display: flex;
  align-items: center;
  gap: 7px;
  width: 68px;
  height: 32px;
  padding-left: 5px;
  margin-right: 7px;
  background: linear-gradient(#3a3a3a, #585858);
  border-radius: 3px 0 0 0;

  button + button {
    margin-left: 6px;
  }
`;

const CommandHistory = styled.button`
  width: 24px;
  height: 30px;
  display: flex;
  justify-content: center;
  align-items: center;

  &::before {
    content: "";
    border: 5px solid transparent;
    border-bottom-color: #111;
    border-top: 0;
  }
`;

const HelperBar = styled.div`
  display: flex;
  height: 39px;
  padding-top: 4px;
  background: #5b5b5b;
  border-top: 1px solid #6a6a6a;
`;

const HelperTools = styled.div`
  display: flex;
  align-items: center;
  gap: 9px;
  height: 29px;
  margin-left: -16px;
  padding-right: 5px;
  border: 1px solid #3a3a3a;

  button {
    width: 20px;
    height: 20px;
    background: #c4c4c4;
  }

  hr {
    width: 1px;
    height: 26px;
    margin: 0 -4px 0 -1px;
    border: 0;
    background: #2a2a2a;
  }
`;

const LayoutTabs = styled.div`
  display: flex;
  height: 23px;
  margin-left: -14px;
  background: #363636;
`;

const LayoutTab = styled.button`
  width: ${(p) => p.$width}px;
  height: 21px;
  margin-right: 1px;
  color: #b4b4b4;
  background: #565656;
  clip-path: ${(p) =>
    p.$add
      ? "polygon(20% 0, 100% 0, 92% 60%, 72% 100%, 0 100%, 8% 40%)"
      : "polygon(0 0, 100% 0, 93% 70%, 86% 100%, 10% 100%, 4% 70%)"};
  font-weight: ${(p) => (p.$add ? 700 : 400)};
`;

const StatusRow = styled.div`
  height: 36px;
  padding: 2px 0 3px 336px;
  background: #363636;
`;

const StatusBar = styled.div`
  display: flex;
  height: 31px;
  background: #4a4a4a;
  border: 1px solid #868686;
  border-right: 0;
  color: #f2f2f2;
  font-size: 14px;
  white-space: nowrap;
  overflow: hidden;
`;

const StatusCell = styled.button`
  flex: none;
  display: flex;
  align-items: center;
  justify-content: ${(p) => p.$align || "center"};
  width: ${(p) => p.$width}px;
  padding: 0 ${(p) => p.$pad || 0}px;
  border-right: ${(p) => (p.$sep ? "1px solid #7a7a7a" : 0)};
  font-weight: ${(p) => (p.$strong ? 500 : 400)};
`;

const Wallpaper = styled.div`
  height: 8px;
  background: linear-gradient(
    90deg,
    #020a02, #0c3a0a 2%, #0a5a0a 4%, #5f9a3a 5%, #0a4a0a 6%, #063006 9%, #0e6a10 12%, #002200 14%,
    #0b5a0c 17%, #7aa04c 19%, #084008 20%, #3a9a20 23%, #0a500a 26%, #4a3a14 28%, #010801 30%, #0a3a0a 35%,
    #3f9a20 38%, #063006 41%, #041804 44%, #0d7a12 47%, #041804 50%, #5d8a3a 53%, #010501 54%, #010801 60%,
    #0a7a10 64%, #063006 67%, #010801 71%, #8aa860 75%, #052005 77%, #0c5a10 80%, #031003 84%, #0b5a10 88%,
    #063006 91%, #7a9a50 95%, #052005
  );
`;

const Taskbar = styled.footer`
  display: flex;
  justify-content: space-between;
  height: 51px;
  border-bottom: 2px solid #9c9a76;
  background: linear-gradient(90deg, #cce4c2, #cfe6c4 30%, #d3e8bd 50%, #c5e2c6 58%, #cbe3cd 68%, #cae5c4 80%, #cfe8c2);
  color: #1a1a1a;
`;

const TaskGroup = styled.div`
  display: flex;
`;

const TaskButton = styled.button`
  display: flex;
  align-items: center;
  justify-content: ${(p) => p.$align || "center"};
  width: ${(p) => p.$width || 62}px;
  height: 49px;
  margin: 0 ${(p) => p.$gap || 0}px;
  background: ${(p) => (p.$active ? "#eef6ea" : "none")};
  border-bottom: ${(p) => (p.$open ? "4px solid #336a9c" : 0)};
`;

const Tray = styled.div`
  flex: none;
  display: flex;
  align-items: center;
  width: 347px;

  button {
    flex: none;
    display: flex;
    justify-content: center;
    width: 30px;
    font-size: 18px;
  }

  button:nth-child(9) {
    width: 40px;
  }
`;

const Clock = styled.time`
  flex: none;
  width: 80px;
  margin-left: 12px;
  font-size: 16px;
  line-height: 23px;
  text-align: center;
`;

const ImeBar = styled.div`
  position: absolute;
  z-index: 2;
  right: 0;
  bottom: 112px;
  display: flex;
  width: 240px;
  height: 35px;
  padding: 4px 0 3px 20px;
  background: #000;
  overflow: hidden;
`;

const ImeTools = styled.div`
  flex: none;
  display: flex;
  align-items: center;
  height: 28px;
  padding-left: 20px;
  background: #fff;
  color: #1f6fae;

  button {
    display: flex;
    justify-content: center;
    width: 27px;
    font-size: 18px;
    font-weight: 700;
  }
`;

const ImeLogo = styled.div`
  position: absolute;
  left: 1px;
  top: 0;
`;

const RecordBall = styled.button`
  position: absolute;
  z-index: 1;
  right: 60px;
  bottom: 58px;
  width: 64px;
  height: 64px;
  border-radius: 50%;
  border: 3px solid #e6f4ff;
  background: linear-gradient(160deg, #4f9bf0, #3a8eee 70%, #7cc0fa);
  color: #d8ecff;
  font-size: 16px;
`;

const BannerLayer = styled.div`
  position: absolute;
  inset: 0;
  display: grid;
  place-items: center;
  pointer-events: none;
`;

const Banner = styled.h1`
  margin: 0;
  padding: 1px 8px 0;
  background: #f8ea0b;
  color: #000;
  font-family: "Noto Sans", "Noto Sans CJK SC", sans-serif;
  font-size: 112px;
  font-weight: 500;
  line-height: 115px;
  text-align: center;
  white-space: nowrap;
`;

/* ---------- data ---------- */

const tabs = ["默认", "插入", "注释", "参数化", "视图", "管理", "输出", "附加模块", "A360", "精选应用"];

const helperTools = [
  "nodes", "help", "blocks", null, "lamp", "four", "replace", "place", "curve", "glass", "glasses",
  "mirror", "align", "wire", "lampLine", "breakLine", "dashed", "arrow", "redPen", "strike", "greenPen",
  "band", "lampTable", "spark", "grid", "redTable", "bulbTable", "char", "pages", "cherry", "contour",
  "cross", "sketch", "layerBlue", "layerYellow", "lock", "unlock", "cube", "cubeIso",
];

// [icon, width, separator]
const statusTools = [
  ["grid", 31], ["snap", 30], ["caret", 21, 1], ["infer", 32, 1], ["dyn", 30, 1], ["ortho", 31],
  ["polar", 30], ["caret", 19], ["iso", 31], ["caret", 19, 1], ["track", 31], ["osnap", 30],
  ["caret", 19, 1], ["weight", 30, 1], ["transp", 32, 1], ["cycle", 31, 1], ["snap3d", 31],
  ["caret", 19, 1], ["ducs", 31], ["cube", 31], ["caret", 18], ["gizmo", 31], ["caret", 22, 1],
  ["annoVis", 30], ["annoAuto", 30], ["anno", 29],
];

const StatusTools = ({ items }) =>
  items.map(([icon, width, sep], i) => (
    <StatusCell key={i} $width={width} $sep={sep} aria-label={icon}>
      {icon === "caret" ? <Caret /> : <Icon>{status[icon]}</Icon>}
    </StatusCell>
  ));

const App = () => {
  const [activeTab, setActiveTab] = useState("默认");
  const [command, setCommand] = useState("");

  return (
    <Page>
      <GlobalStyle />

      <TitleBar>
        <QuickAccess>
          {["open", "save", "saveas", "print", "undo"].map((name) => (
            <QuickButton key={name} aria-label={name}>
              <Icon>{small[name]}</Icon>
            </QuickButton>
          ))}
          <QuickButton $narrow aria-label="undo list">
            <Caret />
          </QuickButton>
          <QuickButton aria-label="redo">
            <Icon>{small.redo}</Icon>
          </QuickButton>
          <QuickButton $narrow aria-label="redo list">
            <Caret />
          </QuickButton>
          <CustomizeButton aria-label="customize">
            <Caret />
          </CustomizeButton>
        </QuickAccess>
        <WindowTitle>
          <span>Autodesk AutoCAD 2018</span>
          <span>设计说明及系统图</span>
        </WindowTitle>
        <ClassTimer>
          上课中 00:00:27
          <Icon size={12} box={12}>
            <path d="M1 9l5-6 5 6" stroke="#444" strokeWidth="1.5" />
          </Icon>
        </ClassTimer>
        <InfoCenter>
          <InfoToggle aria-label="toggle search" />
          <SearchInput aria-label="搜索" placeholder="键入关键字或短语" />
          <InfoButton $gap={3} aria-label="search">
            <Icon>{small.binoculars}</Icon>
          </InfoButton>
          <InfoButton $gap={10}>
            <Icon>{small.user}</Icon>
            登录
          </InfoButton>
          <InfoButton $gap={75} aria-label="account">
            <Caret />
          </InfoButton>
          <InfoButton $gap={12} aria-label="store">
            <Icon>{small.cart}</Icon>
          </InfoButton>
          <InfoButton $gap={10} aria-label="exchange">
            <Icon>{small.exchange}</Icon>
            <Caret />
          </InfoButton>
          <InfoRule />
          <InfoButton $gap={11} aria-label="help">
            <Icon>{small.help}</Icon>
            <Caret />
          </InfoButton>
        </InfoCenter>
        <WindowButtons>
          <button aria-label="minimize">
            <Icon size={12} box={12}>
              <path d="M0 6h12" stroke="#222" />
            </Icon>
          </button>
          <button aria-label="maximize">
            <Icon size={14} box={14}>
              <path d="M1 1h12v12H1z" stroke="#222" strokeWidth="1.4" />
            </Icon>
          </button>
        </WindowButtons>
      </TitleBar>

      <TabBar>
        {tabs.map((tab) => (
          <RibbonTab key={tab} $active={tab === activeTab} onClick={() => setActiveTab(tab)}>
            {tab}
          </RibbonTab>
        ))}
        <CollapseButton aria-label="collapse ribbon">
          <svg width="18" height="10" viewBox="0 0 18 10">
            <rect width="18" height="10" rx="2" fill="#dcdcdc" />
            <path d="M5 7l4-4 4 4z" fill="#333" />
          </svg>
          <Caret />
        </CollapseButton>
      </TabBar>

      <Ribbon>
        <Panel width={264} title="绘图" pad={42}>
          <Big icon="polyline" label="多段线" width={60} />
          <Big icon="circle" label="圆" caret width={50} />
          <Big icon="arc" label="圆弧" caret width={56} />
          <ToolGrid $left={5}>
            <Tool icon="rect" caret />
            <Tool icon="ellipse" caret />
            <Tool icon="hatch" caret />
          </ToolGrid>
        </Panel>

        <Panel width={284} title="修改" pad={6}>
          <ToolGrid $gap={17}>
            <Tool icon="move" label="移动" />
            <Tool icon="copy" label="复制" />
            <Tool icon="stretch" label="拉伸" />
            <Tool icon="rotate" label="旋转" />
            <Tool icon="mirror" label="镜像" />
            <Tool icon="scale" label="缩放" />
            <Tool icon="trim" label="修剪" caret />
            <Tool icon="fillet" label="圆角" caret />
            <Tool icon="array" label="阵列" caret />
            <Tool icon="erase" />
            <Tool icon="explode" />
            <Tool icon="offset" />
          </ToolGrid>
        </Panel>

        <Panel width={195} title="注释" pad={5}>
          <Big icon="text" label="文字" caret width={52} />
          <Big icon="dim" label="标注" width={54} />
          <ToolGrid $left={1}>
            <Tool icon="linear" label="线性" caret />
            <Tool icon="leader" label="引线" caret />
            <Tool icon="table" label="表格" />
          </ToolGrid>
        </Panel>

        <Panel width={316} title="图层" pad={5}>
          <Big icon="layerProps" label="图层" second="特性" width={43} />
          <LayerTools>
            <LayerSelect aria-label="图层">
              <Icon>{small.bulb}</Icon>
              <Icon>{small.sun}</Icon>
              <Icon>{small.unlock}</Icon>
              <Swatch $size={18} />
              0
              <Caret $big />
            </LayerSelect>
            <LayerRow>
              <Tool icon="layerOff" />
              <Tool icon="layerIso" />
              <Tool icon="layerFreeze" />
              <Tool icon="layerLock" />
              <Tool icon="layerCur" label="置为当前" />
            </LayerRow>
            <LayerRow>
              <Tool icon="layerOn" />
              <Tool icon="layerUniso" />
              <Tool icon="layerThaw" />
              <Tool icon="layerUnlock" />
              <Tool icon="layerMatch" label="匹配图层" />
            </LayerRow>
          </LayerTools>
        </Panel>

        <Panel width={167} title="块">
          <Big icon="insert" label="插入" caret width={52} />
          <ToolGrid $left={2}>
            <Tool icon="create" label="创建" />
            <Tool icon="edit" label="编辑" />
            <Tool icon="editAttr" label="编辑属性" caret />
          </ToolGrid>
        </Panel>

        <Panel width={306} title="特性" launcher pad={4}>
          <Big icon="matchProps" label="特性" second="匹配" width={45} />
          <ToolGrid $left={5}>
            <Tool icon="wheel" />
            <Tool icon="weights" />
            <Tool icon="linetypes" />
          </ToolGrid>
          <Combos>
            <Combo $pad={14} $gap={12}>
              <Swatch $size={20} />
              <select aria-label="颜色">
                <option>ByLayer</option>
              </select>
              <Caret $big />
            </Combo>
            <Combo $pad={10} $gap={2}>
              <Line $width={74} />
              <select aria-label="线宽">
                <option>ByLayer</option>
              </select>
              <Caret $big />
            </Combo>
            <Combo $pad={4} $gap={2}>
              <Line $width={80} />
              <select aria-label="线型">
                <option>ByLayer</option>
              </select>
              <Caret $big />
            </Combo>
          </Combos>
        </Panel>

        <Panel width={85} title="组" pad={5}>
          <Big icon="group" label="组" width={42} />
          <ToolGrid $left={8}>
            <Tool icon="groupEdit" />
            <Tool icon="ungroup" />
            <PressedTool aria-label="group selection">
              <Icon>{small.groupSel}</Icon>
            </PressedTool>
          </ToolGrid>
        </Panel>

        <Panel width={95} title="实用工具" pad={6}>
          <Big icon="measure" label="测量" caret width={50} />
          <ToolGrid $left={9}>
            <Tool icon="quickSel" />
            <Tool icon="point" />
            <Tool icon="calc" />
          </ToolGrid>
        </Panel>

        <Panel width={95} title="剪贴板" caret={false} pad={6}>
          <Big icon="paste" label="粘贴" caret width={50} />
          <ToolGrid $left={9}>
            <Tool icon="cut" />
            <Tool icon="copyClip" />
          </ToolGrid>
        </Panel>

        <Panel width={40} title="视图" caret={false} />
      </Ribbon>

      <FileTabs>
        <FileTab>车位引导平面图</FileTab>
        <FileTab $active>设计说明及系统图</FileTab>
      </FileTabs>

      <Canvas>
        <ViewLabel>二维线框]</ViewLabel>
        <Drawing width="222" height="40" viewBox="0 0 222 40" fill="none">
          <path d="M1 40V1h220v39" stroke="#8f8f32" />
          <path
            d="M13 13l3 3M20 13l-2 3M24 13v3M60 13v3M64 12v4M69 12v4M73 12l4 4M148 13l-2 3M155 12v4M158 14h4"
            stroke="#ddd"
            strokeWidth="2"
          />
        </Drawing>
        <ViewCube width="66" height="190" viewBox="0 0 66 190">
          <circle cx="66" cy="76" r="54" fill="none" stroke="#2b2b2b" strokeWidth="12" />
          <g fontSize="18" fill="#a8a8a8">
            <text x="57" y="28">北</text>
            <text x="0" y="84">西</text>
            <text x="56" y="141">南</text>
          </g>
          <rect x="41" y="50" width="60" height="52" fill="#8c8c8c" />
          <rect x="50" y="58" width="50" height="34" fill="#808388" />
          <text x="49" y="90" fontSize="32" fill="#4c4c4c">上</text>
          <rect x="38" y="163" width="60" height="20" rx="5" fill="#5e5f62" stroke="#858585" />
          <text x="42" y="178" fontSize="14" fill="#b5b5b5">WCS</text>
        </ViewCube>
        <UcsMark width="12" height="15" viewBox="0 0 12 15">
          <path d="M-3 0l14 15M12 0L0 15" stroke="#ddd" strokeWidth="1.3" />
        </UcsMark>
        <CommandLine onSubmit={(e) => e.preventDefault()}>
          <CommandGrip>
            <svg width="8" height="24" viewBox="0 0 8 24">
              <path d="M1 0v24M4 0v24M7 0v24" stroke="#8a8a8a" strokeDasharray="1 2" />
            </svg>
            <button type="button" aria-label="close">
              <Icon size={11} box={12}>
                <path d="M1 1l10 10M11 1L1 11" stroke="#ddd" strokeWidth="2.4" />
              </Icon>
            </button>
            <button type="button" aria-label="settings">
              <Icon size={18} box={18}>
                <path d="M7 7l9 9" stroke="#ccc" strokeWidth="4" strokeLinecap="round" />
                <path d="M3 1l3 3-1 2-2 0-2-3c-2 4 2 8 6 6 4-2 3-9-4-8z" fill="#ccc" />
              </Icon>
            </button>
          </CommandGrip>
          <Icon size={19} box={19}>
            <rect x=".5" y=".5" width="18" height="18" fill="#9aa0a6" stroke="#777c82" />
            <path d="M4 5l5 4-5 4M10 14h6" stroke="#333a40" strokeWidth="1.6" />
          </Icon>
          <svg width="14" height="6" viewBox="0 0 14 6">
            <path d="M3 0h8L7 5z" fill="#555" />
          </svg>
          <input
            aria-label="命令"
            placeholder="键入命令"
            value={command}
            onChange={(e) => setCommand(e.target.value)}
          />
          <CommandHistory type="button" aria-label="history" />
        </CommandLine>
        <CrossX />
        <CrossY />
      </Canvas>

      <HelperBar>
        <HelperTools>
          {helperTools.map((name) =>
            name ? (
              <button key={name} aria-label={name}>
                <Icon>{helper[name]}</Icon>
              </button>
            ) : (
              <hr key="rule" />
            )
          )}
        </HelperTools>
      </HelperBar>

      <LayoutTabs>
        <LayoutTab $width={66}>布局1</LayoutTab>
        <LayoutTab $width={72}>布局2</LayoutTab>
        <LayoutTab $width={29} $add>+</LayoutTab>
      </LayoutTabs>

      <StatusRow>
        <StatusBar>
          <StatusCell $width={178} $align="flex-end" $pad={8} $sep>
            651086, -196683, 0
          </StatusCell>
          <StatusCell $width={36} $sep $strong>
            模型
          </StatusCell>
          <StatusTools items={statusTools} />
          <StatusCell $width={72}>1:1 / 100%</StatusCell>
          <StatusTools items={[["caret", 20, 1], ["gear", 31], ["caret", 20, 1], ["plus", 32, 1], ["ruler", 32]]} />
          <StatusCell $width={72} $align="flex-start" $pad={6}>
            小数
          </StatusCell>
          <StatusTools
            items={[["caret", 18, 1], ["props", 31, 1], ["anno", 31], ["anno", 22], ["isolate", 31, 1], ["accel", 33, 1], ["shot", 30]]}
          />
        </StatusBar>
      </StatusRow>

      <Wallpaper />

      <Taskbar>
        <TaskGroup>
          <TaskButton $width={26} $align="flex-start" aria-label="task view">
            <Icon>
              <path d="M0 8h4M0 12h4M3 1v18" stroke="#222" strokeWidth="1.5" />
            </Icon>
          </TaskButton>
          <TaskButton aria-label="计算器">
            <Icon size={30} box={30}>
              <path d="M4 0h22v30H4z" fill="#4f7f96" />
              <path d="M6 2h18v6H6z" fill="#5cc4ee" />
              <path d="M6 10h5v5H6zM12 10h5v5h-5zM18 10h6v5h-6zM6 16h5v5H6zM12 16h5v5h-5zM6 22h5v6H6zM12 22h5v6h-5z" fill="#e8eef2" />
              <path d="M18 16h6v12h-6z" fill="#14406e" />
            </Icon>
          </TaskButton>
          <TaskButton $open $width={52} $gap={5} aria-label="文件资源管理器">
            <Icon size={28} box={28}>
              <path d="M1 3h11l3 3h12v20H1z" fill="#f5cf6a" />
              <path d="M1 3h11v4H1z" fill="#d7a03a" />
              <path d="M5 27V15h18v12h-4v-6h-10v6z" fill="#4a96b4" />
            </Icon>
          </TaskButton>
          <TaskButton aria-label="浏览器">
            <Icon size={32} box={32}>
              <path d="M16 16L8 2a16 16 0 0 1 14 0z" fill="#b84ae0" />
              <path d="M16 16l6-14a15 15 0 0 1 8 12z" fill="#f0566e" />
              <path d="M16 16l14-2a15 15 0 0 1-5 12z" fill="#ee5a30" />
              <path d="M16 16l9 10a15 15 0 0 1-12 5z" fill="#f7d92c" />
              <path d="M16 16l-3 15a15 15 0 0 1-11-10z" fill="#3cc84a" />
              <path d="M16 16L2 21A15 15 0 0 1 8 2z" fill="#3a8ff0" />
              <circle cx="16" cy="16" r="3" fill="#fff" />
            </Icon>
          </TaskButton>
          <TaskButton $open $active $width={60} aria-label="AutoCAD">
            <Icon size={26} box={26}>
              <path d="M2 26L11 1h7l7 25h-7l-1-5H9l-1 5z" fill="#a82c28" />
              <path d="M11 17h5l-2-9z" fill="#f3e4e0" />
              <path d="M2 26L11 1h3L8 26z" fill="#c84a42" />
            </Icon>
          </TaskButton>
          <TaskButton $open $width={50} $gap={9} aria-label="课堂">
            <Icon size={28} box={28}>
              <path d="M14 13l10 6-10 9-10-9z" fill="#5ac8e8" />
              <path d="M14 0l14 11-14 12L0 11z" fill="#2474dc" />
              <path d="M11 6l7 5-7 5z" fill="#fff" />
            </Icon>
          </TaskButton>
        </TaskGroup>

        <Tray>
          <button aria-label="more">
            <Icon size={18} box={18}>
              <path d="M1 13l8-9 8 9" stroke="#222" strokeWidth="1.5" />
            </Icon>
          </button>
          <button aria-label="microphone">
            <Icon>
              <rect x="5" y="0" width="9" height="14" rx="2" fill="#111" />
              <path d="M3 10v6h13v-6M9.500 16v4M6 19h7" stroke="#111" />
            </Icon>
          </button>
          <button aria-label="dingtalk">
            <Icon size={18} box={18}>
              <rect width="18" height="18" rx="3" fill="#1c84da" />
              <path d="M5 3c6 2 9 5 8 8l-4 5 1-4z" fill="#fff" />
            </Icon>
          </button>
          <button aria-label="sync">
            <Icon>
              <path d="M6 16H2a8 8 0 1 1 14-3" stroke="#4a90c8" strokeWidth="3" />
              <circle cx="15" cy="14" r="3" fill="#e8c34a" />
              <path d="M11 16l4 4" stroke="#4ab06a" strokeWidth="2" />
            </Icon>
          </button>
          <button aria-label="volume">
            <Icon>
              <path d="M1 7h3l5-5v16l-5-5H1z" stroke="#222" strokeWidth="1.5" />
              <path d="M12 7v6M15 5c2 3 2 7 0 10" stroke="#555" />
              <path d="M18 3c3 4 3 10 0 14" stroke="#999" />
            </Icon>
          </button>
          <button aria-label="network">
            <Icon>
              <path d="M2 18C2 9 8 3 17 2M6 18c0-6 4-10 11-11M10 18c0-3 3-6 7-6" stroke="#555" strokeWidth="1.3" />
              <circle cx="15" cy="17" r="1.800" fill="#111" />
            </Icon>
          </button>
          <button aria-label="battery">
            <Icon>
              <path d="M4 6h13v9H4z" fill="#111" stroke="#111" />
              <path d="M18 8h2v5h-2zM0 3h6v2H0zM2 3h2v6H2z" fill="#111" />
            </Icon>
          </button>
          <button>英</button>
          <button aria-label="sogou">
            <Sogou size={20} />
          </button>
          <Clock>
            20:34
            <br />
            2023/6/14
          </Clock>
        </Tray>
      </Taskbar>

      <RecordBall>00:11</RecordBall>
      <ImeBar>
        <ImeTools>
          <button>中</button>
          <button>°,</button>
          <button aria-label="emoji">
            <Icon>
              <circle cx="10" cy="10" r="8.500" stroke="#1f6fae" strokeWidth="2" />
              <path d="M7 5v4M13 5v4M5 12c2 5 8 5 10 0" stroke="#1f6fae" strokeWidth="1.6" />
            </Icon>
          </button>
          <button aria-label="voice">
            <Icon>
              <rect x="7" y="0" width="6" height="12" rx="3" fill="#1f6fae" />
              <path d="M4 8c0 9 12 9 12 0M10 15v4M6 19h8" stroke="#1f6fae" strokeWidth="2" />
            </Icon>
          </button>
          <button aria-label="keyboard">
            <Icon>
              <rect x="0" y="3" width="20" height="15" rx="2" fill="#1f6fae" />
              <path d="M3 7h14M3 10h14" stroke="#fff" strokeWidth="2" strokeDasharray="2 1" />
              <path d="M5 14h10" stroke="#fff" strokeWidth="2" />
            </Icon>
          </button>
          <button aria-label="handwriting">
            <Icon>
              <circle cx="7" cy="4" r="4" fill="#c4c8d4" />
              <path d="M0 19v-8h9v8zM10 11h10l-2 8h-6z" stroke="#c4c8d4" fill="#e6e8ee" />
            </Icon>
          </button>
          <button aria-label="skin">
            <Icon>
              <path d="M6 1h2c1 2 3 2 4 0h2l6 4-2 4-3-1v11H5V8L2 9 0 5z" fill="#1f6fae" />
            </Icon>
          </button>
          <button aria-label="toolbox">
            <Icon>
              <path d="M1 1h8v8H1zM11 1h8v8h-8zM1 11h8v8H1zM11 11h8v8h-8z" fill="#1f6fae" />
            </Icon>
          </button>
        </ImeTools>
        <ImeLogo>
          <Sogou size={36} />
        </ImeLogo>
      </ImeBar>

      <BannerLayer>
        <Banner>
          停车场管理系统
          <br />
          车位引导系统
          <br />
          实操画图
        </Banner>
      </BannerLayer>
    </Page>
  );
};

export default App;
